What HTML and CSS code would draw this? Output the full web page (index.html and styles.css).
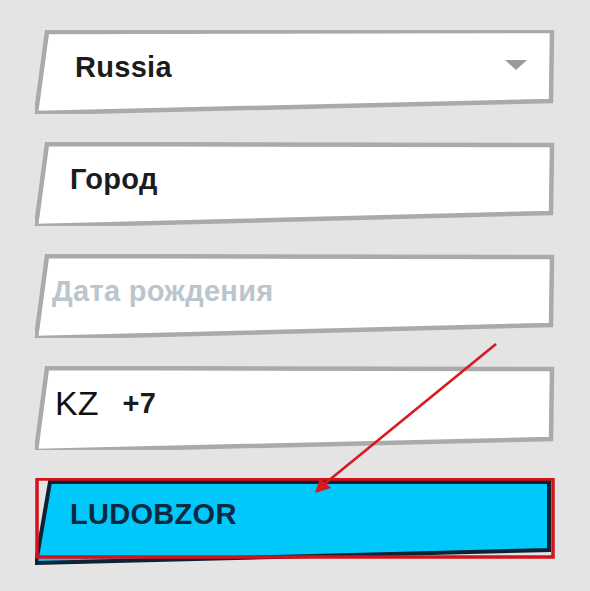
FILE: index.html
```html
<!DOCTYPE html>
<html lang="ru">
<head>
<meta charset="utf-8">
<link rel="stylesheet" href="styles.css">
</head>
<body>
<div class="form">
  <div class="field">
    <svg class="shape" viewBox="0 0 520 84" preserveAspectRatio="none"><polygon points="12,2 517,1 516,71 1,83"/></svg>
    <span class="value country">Russia</span>
    <svg class="caret" viewBox="0 0 22 10"><polygon points="0,0 22,0 11,10"/></svg>
  </div>
  <div class="field">
    <svg class="shape" viewBox="0 0 520 84" preserveAspectRatio="none"><polygon points="12,2 517,3 516,71 1,84"/></svg>
    <span class="value city">Город</span>
  </div>
  <div class="field">
    <svg class="shape" viewBox="0 0 520 84" preserveAspectRatio="none"><polygon points="12,2 517,3 516,71 1,84"/></svg>
    <span class="value placeholder">Дата рождения</span>
  </div>
  <div class="field">
    <svg class="shape" viewBox="0 0 520 84" preserveAspectRatio="none"><polygon points="12,2 517,3 516,73 1,85"/></svg>
    <span class="value code">KZ</span><span class="value prefix">+7</span>
  </div>
  <div class="field promo">
    <svg class="shape" viewBox="0 0 520 88" preserveAspectRatio="none"><polygon class="dark" points="15,4 514,4 514,72 1,85"/><rect class="mark" x="2" y="1" width="516" height="78"/></svg>
    <span class="value promo-text">LUDOBZOR</span>
  </div>
</div>
<svg class="arrow" viewBox="0 0 590 591"><line x1="496" y1="344" x2="322" y2="486"/><polygon points="315,493 320,478 331,488"/></svg>
</body>
</html>
```

FILE: styles.css
```css
html, body {
  margin: 0;
  padding: 0;
}
body {
  background: #e4e4e4;
  width: 590px;
  height: 591px;
  overflow: hidden;
  position: relative;
  font-family: "Liberation Sans", Arial, sans-serif;
}
.form {
  display: flex;
  flex-direction: column;
  gap: 28px;
  padding: 30px 35px 0 35px;
}
.field {
  position: relative;
  width: 520px;
  height: 84px;
  box-sizing: border-box;
  padding-bottom: 9px;
  display: flex;
  align-items: center;
}
.shape {
  position: absolute;
  left: 0;
  top: 0;
  width: 100%;
  height: 100%;
  z-index: 0;
}
.shape polygon {
  fill: #ffffff;
  stroke: #aaaaaa;
  stroke-width: 4.5;
  stroke-linejoin: miter;
}
.value {
  position: relative;
  z-index: 1;
  font-size: 29px;
  letter-spacing: 0.3px;
  font-weight: bold;
  color: #1c1c1c;
}
.country { margin-left: 40px; }
.city { margin-left: 35px; }
.placeholder { margin-left: 17px; color: #bac6ce; }
.code {
  margin-left: 20px;
  font-weight: normal;
  font-size: 34px;
  letter-spacing: 0;
  color: #111;
}
.prefix { margin-left: 24px; }
.caret {
  position: absolute;
  right: 28px;
  top: 30px;
  width: 22px;
  height: 10px;
  z-index: 1;
}
.caret polygon {
  fill: #9a9a9a;
}
.promo {
  height: 88px;
  padding-bottom: 16px;
}
.promo .shape polygon.dark {
  fill: #00c8fa;
  stroke: #0f2233;
  stroke-width: 4;
}
.promo .shape .mark {
  fill: none;
  stroke: #d3121c;
  stroke-width: 3.5;
}
.promo-text {
  margin-left: 35px;
  color: #0c2942;
}
.arrow {
  position: absolute;
  left: 0;
  top: 0;
  width: 590px;
  height: 591px;
  pointer-events: none;
}
.arrow line {
  stroke: #d61a1f;
  stroke-width: 2.6;
}
.arrow polygon {
  fill: #d61a1f;
}
```
